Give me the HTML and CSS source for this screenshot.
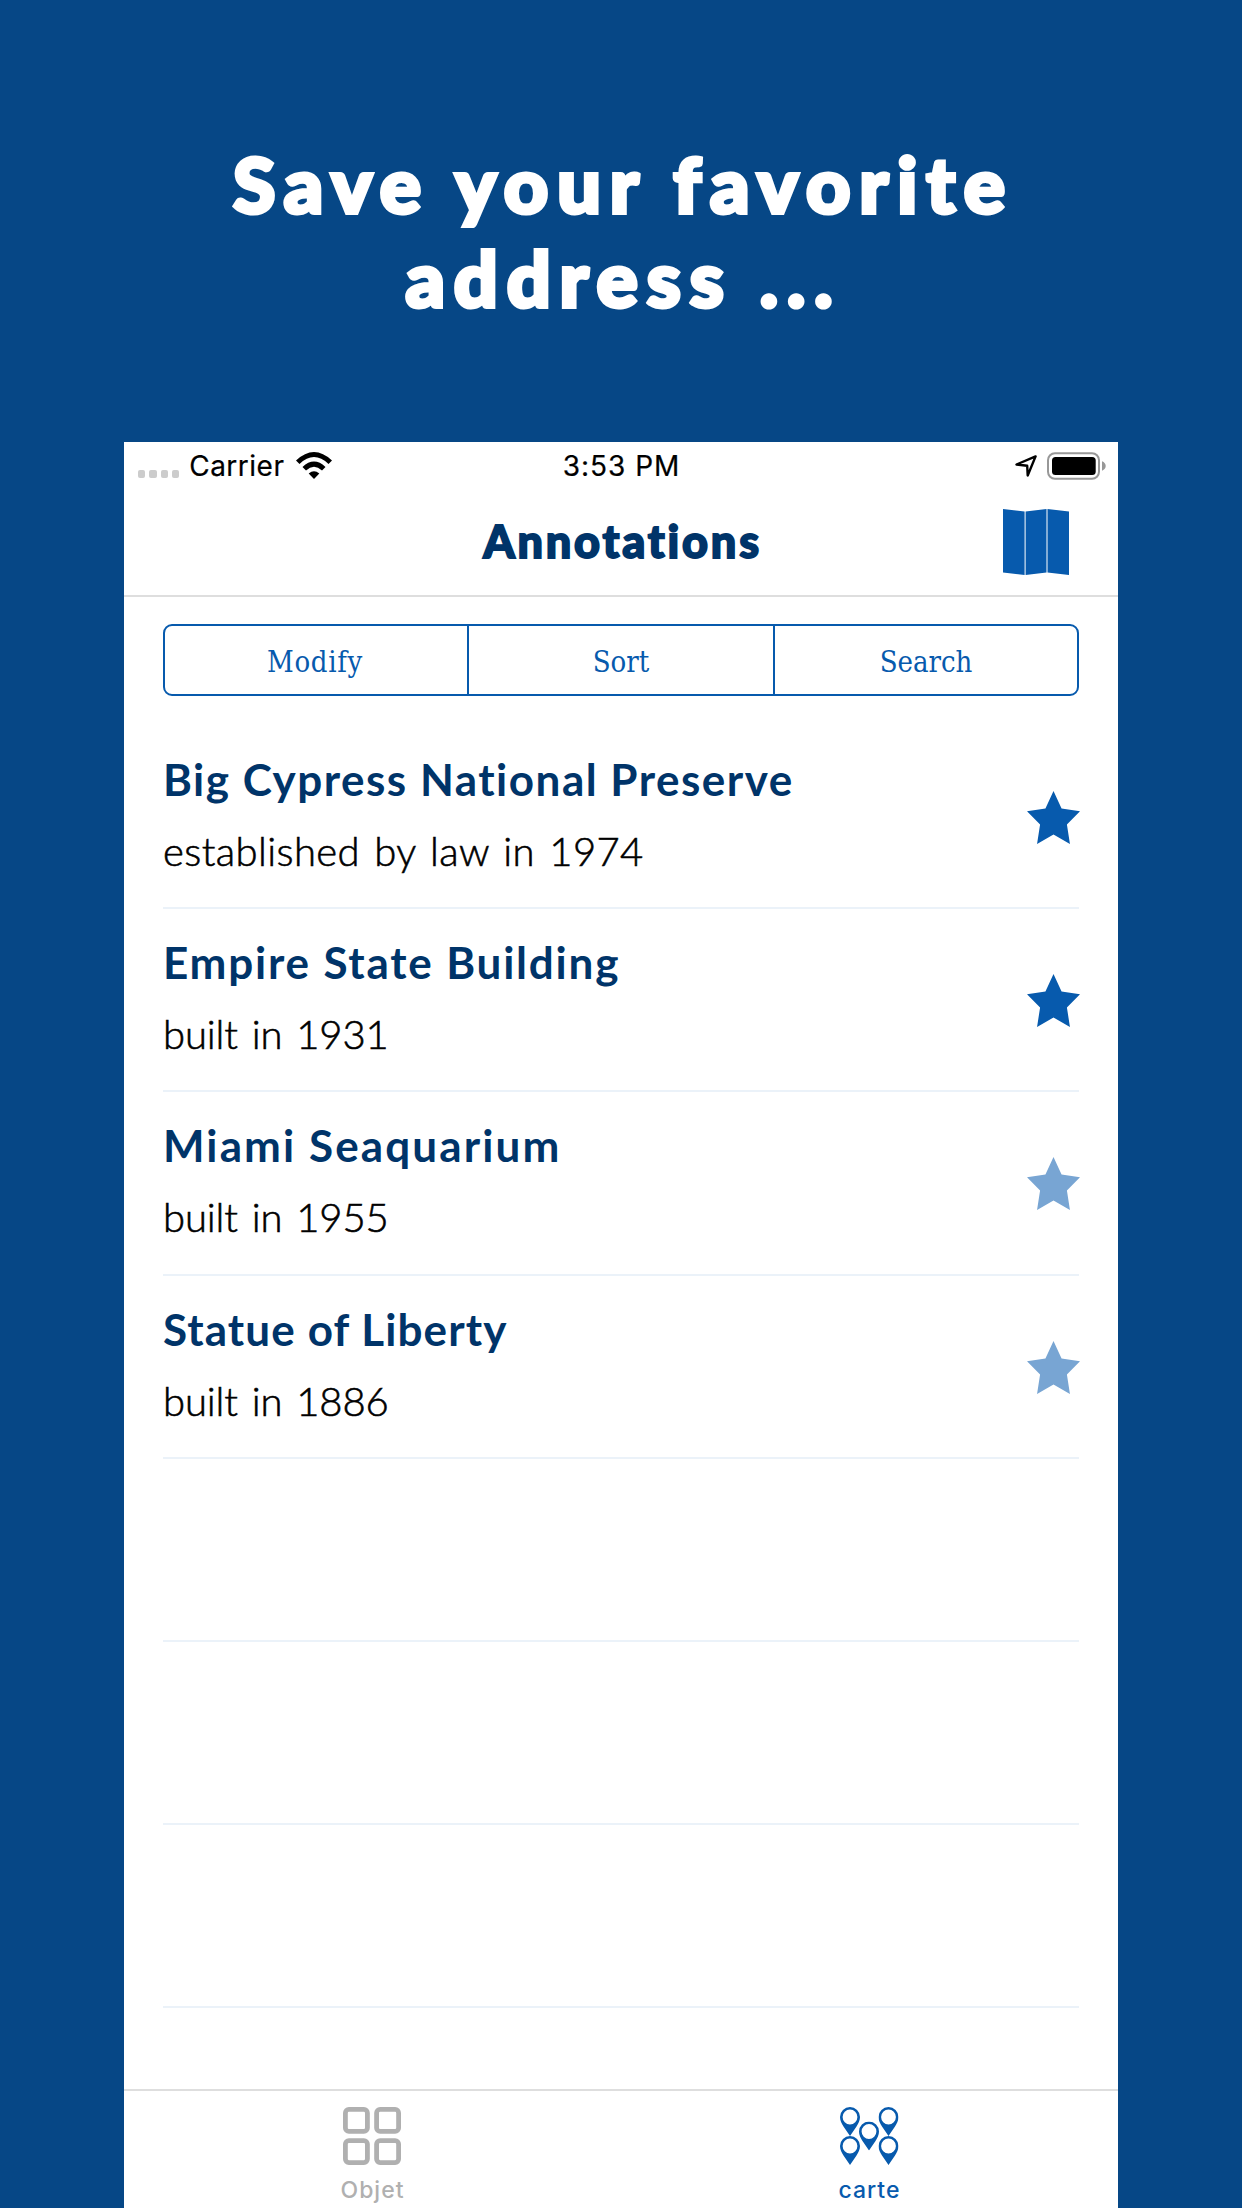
FILE: index.html
```
<!DOCTYPE html>
<html lang="en">
<head>
<meta charset="utf-8">
<title>Annotations</title>
<link rel="stylesheet" href="styles.css">
</head>
<body>
<svg width="0" height="0" class="defs" aria-hidden="true">
  <symbol id="star" viewBox="0 0 158 158"><path d="M79 0l24 52 55 8-39 40 9 58-49-28-49 28 9-58L0 60l55-8z"/></symbol>
  <symbol id="pin" viewBox="0 0 20 29"><path fill-rule="evenodd" d="M10 0a10 10 0 0 1 10 10c0 3.500-1.700 6.500-3.500 9.500L10 29 3.500 19.500C1.700 16.500 0 13.500 0 10A10 10 0 0 1 10 0zm0 2.600a7.400 7.400 0 1 0 0 14.800 7.400 7.400 0 0 0 0-14.800z"/></symbol>
</svg>
<h1 class="headline">Save your favorite<br>address ...</h1>
<main class="phone">
  <div class="status">
    <div class="status-left">
      <span class="signal"><i></i><i></i><i></i><i></i></span>
      <span class="carrier">Carrier</span>
      <svg class="wifi" viewBox="0 0 36 27"><path d="M0 8.500Q18-8.500 36 8.500L32.500 12Q18-1.800 3.500 12z"/><path d="M6.500 15Q18 4.200 29.500 15L26 18.500Q18 11.200 10 18.500z"/><path d="M12.700 21.500Q18 16.800 23.300 21.500L18 27z"/></svg>
    </div>
    <span class="clock">3:53 PM</span>
    <div class="status-right">
      <svg class="arrow" viewBox="0 0 22 22"><path d="M20.600 1.400L1.500 9.500l10.700 1.300.5 9.700z" fill="none" stroke="#000" stroke-width="2.400" stroke-linejoin="round"/></svg>
      <svg class="battery" viewBox="0 0 59 28"><rect x="1" y="1.200" width="51" height="25.600" rx="7" fill="none" stroke="#989898" stroke-width="2"/><rect x="5" y="5" width="43.700" height="18" rx="3.500"/><path d="M55 9.300q3.700 1.500 3.700 4.700T55 18.700z" fill="#989898"/></svg>
    </div>
  </div>
  <header class="nav">
    <span></span>
    <h2>Annotations</h2>
    <svg class="map" viewBox="0 0 66 66"><path d="M0 0l21.600 2.400V66L0 63.400zM22.600 2.400L43.500 0v63.400L22.600 66zM44.500 0L66 2.400V66l-21.500-2.600z"/></svg>
  </header>
  <div class="segments">
    <button class="modify">Modify</button><button>Sort</button><button>Search</button>
  </div>
  <ul class="list">
    <li><div><h3 class="t1">Big Cypress National Preserve</h3><p class="long">established by law in 1974</p></div><svg><use href="#star"/></svg></li>
    <li><div><h3 class="t2">Empire State Building</h3><p>built in 1931</p></div><svg><use href="#star"/></svg></li>
    <li class="off"><div><h3 class="t3">Miami Seaquarium</h3><p>built in 1955</p></div><svg><use href="#star"/></svg></li>
    <li class="off"><div><h3 class="t4">Statue of Liberty</h3><p>built in 1886</p></div><svg><use href="#star"/></svg></li>
    <li></li>
    <li></li>
    <li></li>
  </ul>
  <nav class="tabs">
    <a class="tab">
      <svg viewBox="0 0 58 58" fill="none" stroke="#b0b0b0" stroke-width="4.800"><rect x="2.400" y="2.400" width="22" height="22" rx="3.500"/><rect x="33.600" y="2.400" width="22" height="22" rx="3.500"/><rect x="2.400" y="33.600" width="22" height="22" rx="3.500"/><rect x="33.600" y="33.600" width="22" height="22" rx="3.500"/></svg>
      <span>Objet</span>
    </a>
    <a class="tab active">
      <svg viewBox="0 0 58 58"><use href="#pin" x="0" y="0" width="20" height="29"/><use href="#pin" x="38.500" y="0" width="20" height="29"/><use href="#pin" x="19" y="14.500" width="20" height="29"/><use href="#pin" x="0" y="29" width="20" height="29"/><use href="#pin" x="38.500" y="29" width="20" height="29"/></svg>
      <span>carte</span>
    </a>
  </nav>
</main>
</body>
</html>
```
FILE: styles.css
```
* { box-sizing: border-box; margin: 0; padding: 0; }
body {
  height: 2208px;
  background: #064786;
  font-family: Inter, sans-serif;
  display: flex;
  flex-direction: column;
  align-items: center;
  overflow: hidden;
}
.defs { position: absolute; }
.headline {
  height: 442px;
  flex: none;
  padding: 136px 0 0 5px;
  color: #fff;
  text-align: center;
  font: 900 77px/94px Lato, sans-serif;
  letter-spacing: 8.9px;
  -webkit-text-stroke: 4px #fff;
}
.phone {
  width: 994px;
  height: 1766px;
  background: #fff;
  display: flex;
  flex-direction: column;
}
.status {
  height: 47px;
  display: grid;
  grid-template-columns: 1fr auto 1fr;
  align-items: center;
  font-size: 28px;
  color: #000;
}
.status-left { display: flex; align-items: center; padding-left: 14px; }
.signal { display: flex; gap: 4px; padding-top: 17px; }
.signal i { width: 7.3px; height: 7.3px; border-radius: 2px; background: #ccc; }
.carrier { margin: 0 12px 0 10px; letter-spacing: .5px; -webkit-text-stroke: .2px #000; }
.wifi { width: 36px; height: 27px; }
.clock { letter-spacing: 1px; padding-left: 1px; -webkit-text-stroke: .2px #000; }
.status-right { display: flex; justify-content: flex-end; align-items: center; gap: 10px; padding-right: 12px; }
.arrow { width: 22px; height: 22px; }
.battery { width: 59px; height: 28px; }
.nav {
  height: 108px;
  border-bottom: 2px solid #dedede;
  display: grid;
  grid-template-columns: 1fr auto 1fr;
  align-items: center;
}
.nav h2 {
  font: 900 45px/54px Lato, sans-serif;
  letter-spacing: 2.8px;
  color: #003469;
  -webkit-text-stroke: 1.8px #003469;
  padding: 0 0 3px 3px;
}
.map { width: 66px; height: 66px; justify-self: end; margin-right: 49px; fill: #075aad; }
.segments {
  margin: 27px 39px 0;
  height: 72px;
  display: grid;
  grid-template-columns: 302px 306px 1fr;
  border: 2px solid #075aad;
  border-radius: 9px;
}
.segments button {
  background: none;
  border: 0;
  padding-top: 3px;
  color: #075aad;
  font: 29px "DejaVu Serif Condensed", "DejaVu Serif", serif;
}
.segments button + button { border-left: 2px solid #075aad; }
.segments .modify { letter-spacing: .7px; padding-right: 2px; }
.list { list-style: none; margin: 30px 39px 0; flex: 1; }
.list li {
  height: 183.2px;
  border-bottom: 2px solid #ebf2f9;
  display: flex;
  justify-content: space-between;
  align-items: center;
}
.list div { align-self: flex-start; padding-top: 26px; }
.list h3 {
  font: 700 44px/54px Lato, sans-serif;
  color: #003469;
  white-space: nowrap;
}
.t1 { letter-spacing: 1.5px; }
.t2 { letter-spacing: 1.8px; }
.t3 { letter-spacing: 2.1px; }
.t4 { letter-spacing: 1.1px; }
.list p {
  margin-top: 20px;
  font: 300 40px/50px Lato, sans-serif;
  letter-spacing: -.1px;
  word-spacing: 3px;
  -webkit-text-stroke: .6px #000;
  color: #000;
}
.list .long { letter-spacing: .4px; }
.list svg { width: 53px; height: 53px; margin: 2px -1px 0 0; fill: #075aad; }
.off svg { fill: #78a5d3; }
.tabs {
  height: 119px;
  border-top: 2px solid #dedede;
  display: grid;
  grid-template-columns: 1fr 1fr;
}
.tab {
  display: flex;
  flex-direction: column;
  align-items: center;
  padding: 16px 2px 0 0;
  font-size: 23px;
  font-weight: 500;
  line-height: 28px;
  letter-spacing: 1px;
  color: #b0b0b0;
}
.tab svg { width: 58px; height: 58px; overflow: visible; }
.tab span { margin-top: 11px; padding-left: 2px; }
.active { color: #075aad; fill: #075aad; }
```
